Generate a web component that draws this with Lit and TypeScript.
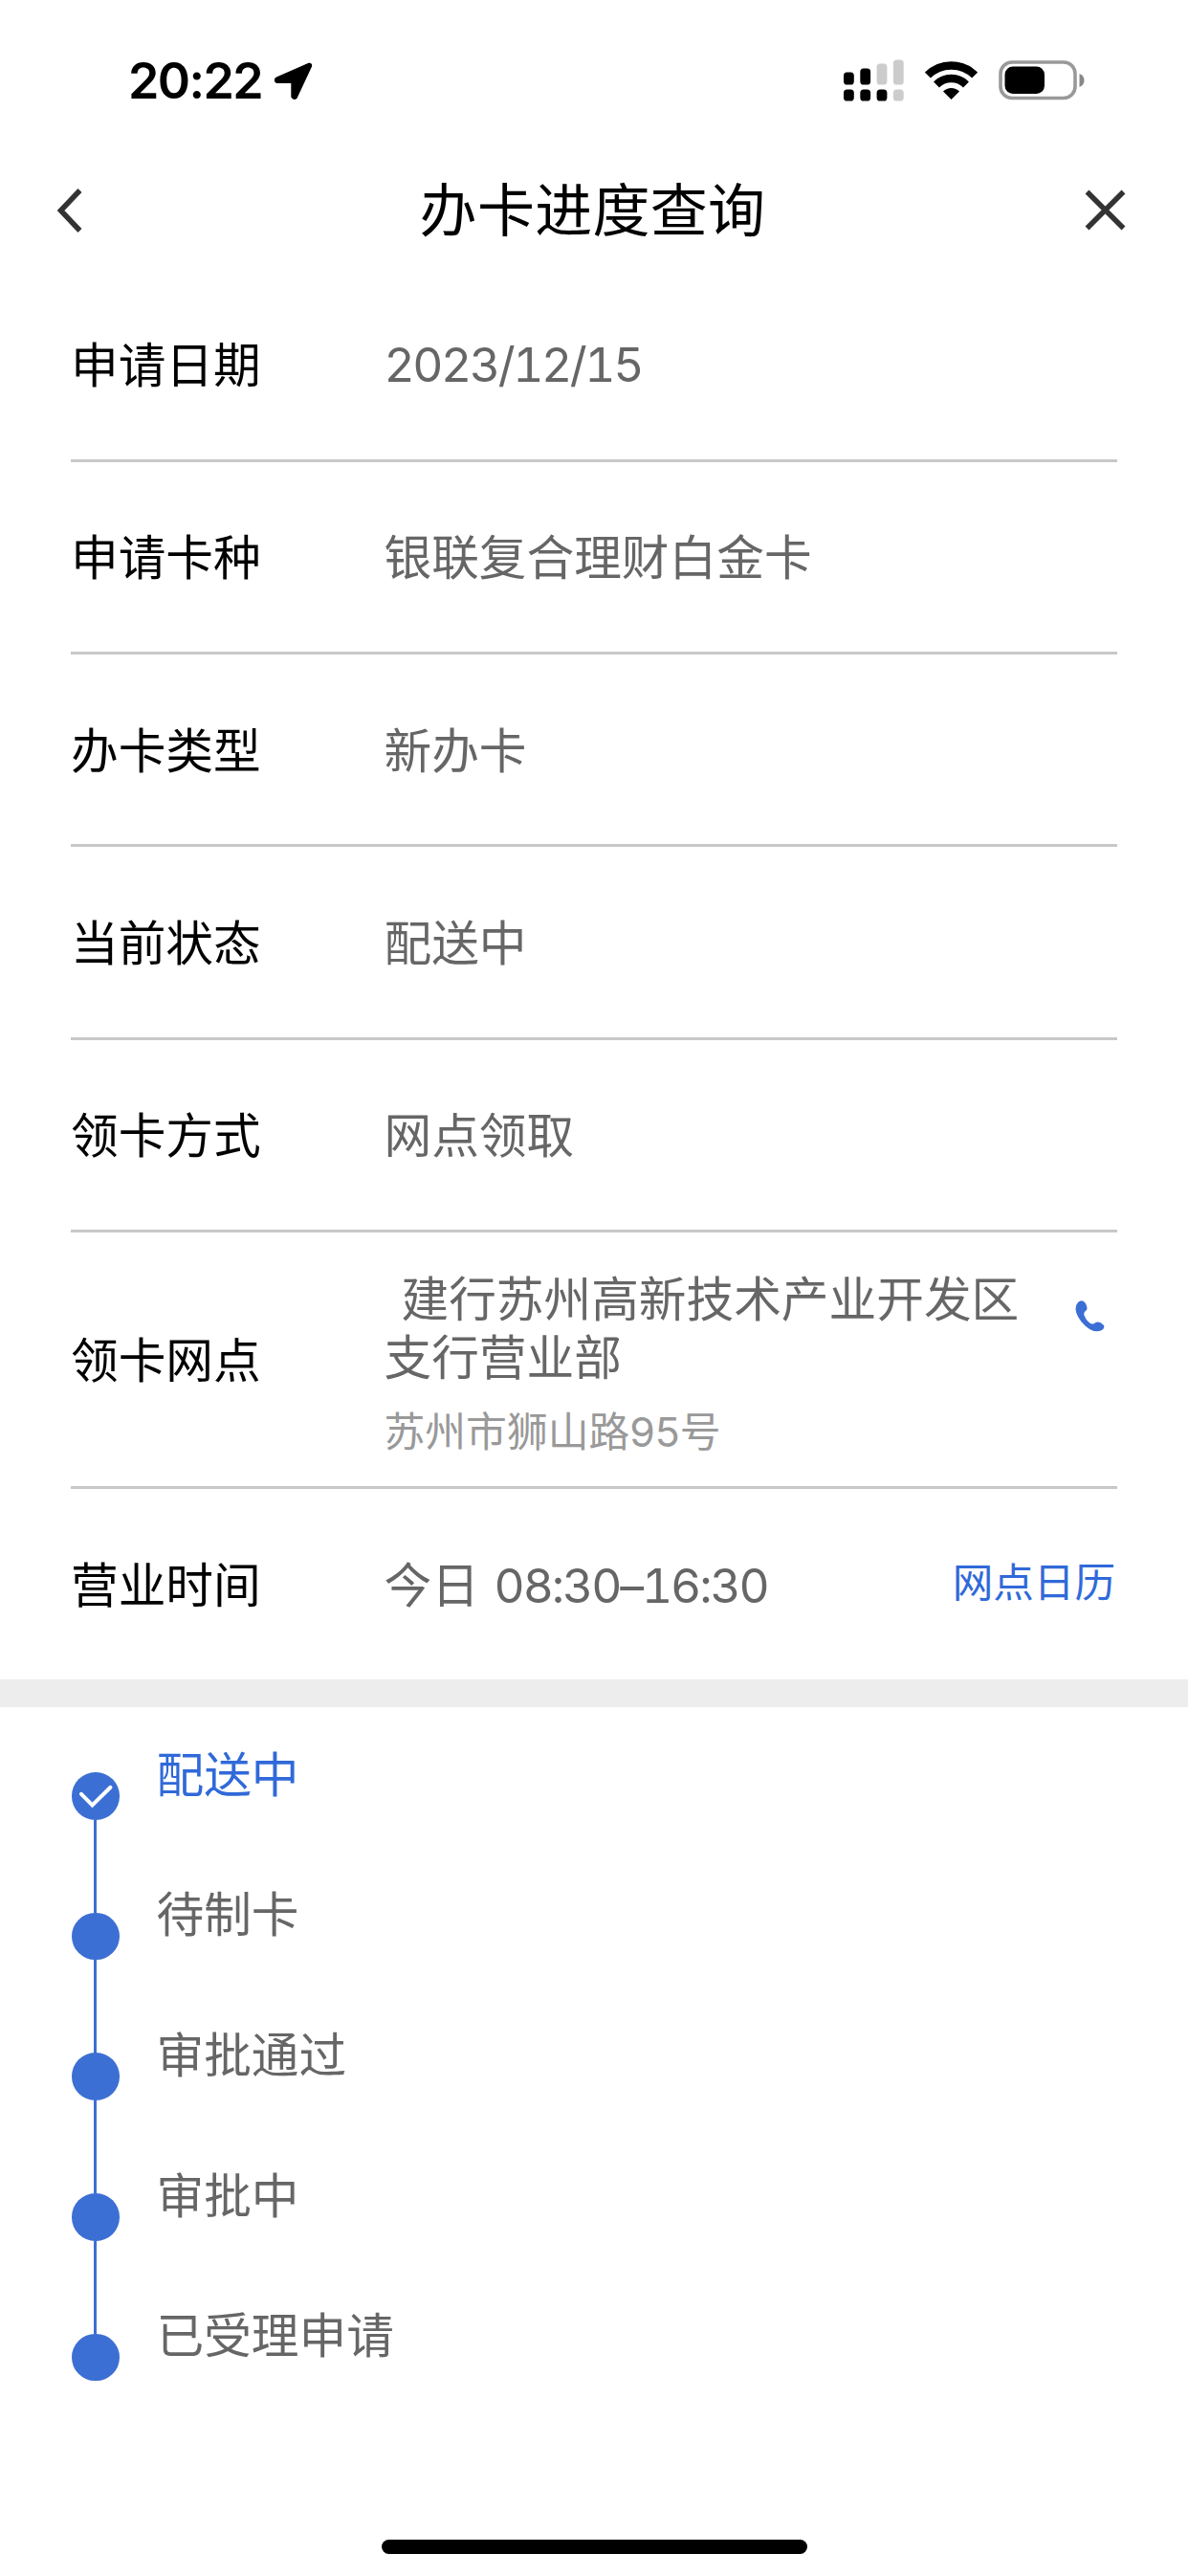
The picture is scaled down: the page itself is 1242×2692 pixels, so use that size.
import { LitElement, html, css, svg, nothing } from "lit";
import { customElement } from "lit/decorators.js";

interface Step {
  label: string;
  current?: boolean;
}

const ROWS: [string, string][] = [
  ["申请日期", "2023/12/15"],
  ["申请卡种", "银联复合理财白金卡"],
  ["办卡类型", "新办卡"],
  ["当前状态", "配送中"],
  ["领卡方式", "网点领取"],
];

const STEPS: Step[] = [
  { label: "配送中", current: true },
  { label: "待制卡" },
  { label: "审批通过" },
  { label: "审批中" },
  { label: "已受理申请" },
];

const SIGNAL: [number, number, boolean, boolean][] = [
  [0, 13, true, true],
  [17.3, 17, true, true],
  [34.6, 22, false, true],
  [51.9, 26, false, false],
];

@customElement("app-root")
export class AppRoot extends LitElement {
  static styles = css`
    :host {
      display: block;
      width: 1242px;
      height: 2692px;
      background: #fff;
      font-family: Inter, "Noto Sans CJK SC", sans-serif;
      color: #000;
    }
    * { box-sizing: border-box; }
    .screen { height: 100%; display: flex; flex-direction: column; }
    svg { display: block; flex: none; }
    .status {
      height: 168px;
      padding: 0 107px 0 134px;
      display: flex;
      justify-content: space-between;
      align-items: center;
    }
    .clock { display: flex; align-items: center; gap: 12px; padding-top: 1px; }
    .time { font-size: 52px; line-height: 60px; font-weight: 600; letter-spacing: -1.6px; padding-top: 1px; }
    .indicators { display: flex; align-items: center; gap: 22px; }
    .nav {
      height: 102px;
      padding: 1px 64px 0 58px;
      display: flex;
      align-items: center;
      justify-content: space-between;
    }
    .title {
      margin: 0;
      padding: 0 0 0 3px;
      font-size: 60px;
      line-height: 84px;
      letter-spacing: 0.3px;
      font-weight: 400;
    }
    .details { padding: 11.2px 74px 0; height: 1485px; flex: none; }
    .row {
      height: 201.4px;
      padding-top: 3px;
      display: flex;
      align-items: center;
      border-bottom: 3px solid #c8c8c8;
      font-size: 49.68px;
      line-height: 60px;
    }
    .row.branch { height: 268.3px; }
    .row.hours { border-bottom: 0; height: 200px; padding-top: 2px; }
    .label { width: 327.5px; flex: none; }
    .value { flex: 1; color: #666; }
    .branch .value { padding-top: 10px; }
    .digits { font-variant-numeric: tabular-nums; letter-spacing: -2.4px; padding-bottom: 1px; }
    .hours .digits { letter-spacing: -2.1px; word-spacing: 4.5px; }
    .hours .day { letter-spacing: 0; }
    .name { white-space: pre-wrap; line-height: 61px; word-spacing: 4px; }
    .address { font-size: 42.8px; color: #999; margin-top: 17px; }
    .call { align-self: flex-start; padding: 67.5px 13px 0 0; }
    .link { color: #3069d9; font-size: 42.6px; padding: 0 2px 6px 0; }
    .band { height: 29px; background: #ededed; flex: none; }
    .steps { padding: 40.5px 74px 0 75px; flex: 1; }
    .step { height: 146.7px; display: flex; gap: 39px; color: #666; font-size: 49.68px; line-height: 60px; }
    .step.current { color: #3069d9; }
    .rail { width: 49.5px; padding-top: 27.5px; display: flex; flex-direction: column; align-items: center; }
    .dot { width: 49.5px; height: 49.5px; border-radius: 50%; background: #3c6fd4; flex: none; }
    .line { width: 3px; height: 97.4px; background: #3c6fd4; flex: none; }
    .home { height: 38px; display: flex; justify-content: center; flex: none; }
    .pill { width: 445px; height: 15px; border-radius: 8px; background: #000; }
  `;

  private renderStatus() {
    return html`
      <div class="status">
        <div class="clock">
          <span class="time">20:22</span>
          <svg width="41" height="40" viewBox="0 0 41 40">
            <path d="M36.8 2.5 L3.2 17.3 Q1.8 19.3 3.5 20.2 H20 V36 Q21.5 38.5 23.3 36.3 L38.5 3.8 Q38.6 2 36.8 2.5Z" stroke="#000" stroke-width="3.4" stroke-linejoin="round" />
          </svg>
        </div>
        <div class="indicators">
          <svg width="63" height="44" viewBox="0 0 63 44">
            ${SIGNAL.map(([x, h, top, bottom]) => svg`
              <rect x=${x} y=${26.5 - h} width="10.8" height=${h} rx="3.6" fill=${top ? "#000" : "#ccc"} />
              <rect x=${x} y="31.5" width="10.8" height="12" rx="3.6" fill=${bottom ? "#000" : "#ccc"} />`)}
          </svg>
          <svg width="55" height="40" viewBox="0 0 55 40">
            <g fill="none" stroke="#000" stroke-width="8.4">
              <path d="M2.9 14.6 A35 35 0 0 1 52.1 14.6" />
              <path d="M12 24.4 A22 22 0 0 1 43 24.4" />
            </g>
            <path d="M27.5 40 L19 31.5 A12 12 0 0 1 36 31.5Z" />
          </svg>
          <svg width="91" height="42" viewBox="0 0 91 42">
            <rect x="2" y="2" width="78" height="37.5" rx="12" fill="none" stroke="#999" stroke-width="3.6" />
            <rect x="6.5" y="6.5" width="41.5" height="28.5" rx="8.5" />
            <path d="M84.5 14 Q89.5 16 89.5 21 Q89.5 26 84.5 28Z" fill="#888" />
          </svg>
        </div>
      </div>`;
  }

  private renderNav() {
    return html`
      <div class="nav">
        <svg width="44" height="46" viewBox="0 0 44 46" fill="none" stroke="#333" stroke-width="5.5">
          <path d="M25.5 2 L5.5 23 L25.5 44" />
        </svg>
        <h1 class="title">办卡进度查询</h1>
        <svg width="44" height="44" viewBox="0 0 44 44" fill="none" stroke="#333" stroke-width="5.5">
          <path d="M2.5 2.5 L40.5 40.5 M40.5 2.5 L2.5 40.5" />
        </svg>
      </div>`;
  }

  private renderDetails() {
    return html`
      <div class="details">
        ${ROWS.map(([label, value]) => html`
          <div class="row">
            <span class="label">${label}</span>
            <span class="value ${/^\d/.test(value) ? "digits" : ""}">${value}</span>
          </div>`)}
        <div class="row branch">
          <span class="label">领卡网点</span>
          <div class="value">
            <div class="name"> 建行苏州高新技术产业开发区<br>支行营业部</div>
            <div class="address">苏州市狮山路95号</div>
          </div>
          <div class="call">
            <svg width="31" height="33" viewBox="0 0 31 33" fill="#3c6fd4">
              <path d="M3 2 Q7 -1.5 10.5 2.5 Q14 8 11.5 10.5 Q8.5 12 9.5 15.5 Q12 22 17 24.5 Q19.5 25 21.5 23 Q26 21 30 26 Q31.5 29 27 31.5 Q19 34.5 10 26 Q1 17 0.5 9 Q0.5 4.5 3 2Z" />
            </svg>
          </div>
        </div>
        <div class="row hours">
          <span class="label">营业时间</span>
          <span class="value digits"><span class="day">今日</span> 08:30–16:30</span>
          <span class="link">网点日历</span>
        </div>
      </div>`;
  }

  private renderSteps() {
    return html`
      <div class="steps">
        ${STEPS.map((step, i) => html`
          <div class="step ${step.current ? "current" : ""}">
            <div class="rail">
              <div class="dot">
                ${step.current ? html`
                  <svg width="49.5" height="49.5" viewBox="0 0 49.5 49.5" fill="none" stroke="#fff" stroke-width="4" stroke-linecap="round">
                    <path d="M10 22.8 L21.5 34.5 L40.5 15.8" />
                  </svg>` : nothing}
              </div>
              ${i < STEPS.length - 1 ? html`<div class="line"></div>` : nothing}
            </div>
            <span>${step.label}</span>
          </div>`)}
      </div>`;
  }

  render() {
    return html`
      <div class="screen">
        ${this.renderStatus()}
        ${this.renderNav()}
        ${this.renderDetails()}
        <div class="band"></div>
        ${this.renderSteps()}
        <div class="home"><div class="pill"></div></div>
      </div>`;
  }
}
